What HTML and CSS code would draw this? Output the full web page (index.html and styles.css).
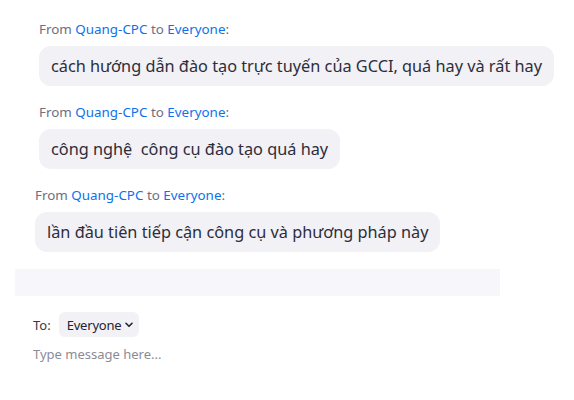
FILE: index.html
```html
<!DOCTYPE html>
<html lang="vi">
<head>
<meta charset="utf-8">
<link rel="stylesheet" href="styles.css">
</head>
<body>
<div class="chat">
  <div class="msg msg-a">
    <div class="meta">From <span class="name">Quang-CPC</span> to <span class="name">Everyone</span>:</div>
    <div class="bubble">cách hướng dẫn đào tạo trực tuyến của GCCI, quá hay và rất hay</div>
  </div>
  <div class="msg msg-a">
    <div class="meta">From <span class="name">Quang-CPC</span> to <span class="name">Everyone</span>:</div>
    <div class="bubble">công nghệ&nbsp; công cụ đào tạo quá hay</div>
  </div>
  <div class="msg msg-b">
    <div class="meta">From <span class="name">Quang-CPC</span> to <span class="name">Everyone</span>:</div>
    <div class="bubble">lần đầu tiên tiếp cận công cụ và phương pháp này</div>
  </div>
  <div class="band"></div>
  <div class="compose">
    <div class="to-row">
      <span class="to-label">To:</span>
      <span class="dropdown">Everyone
        <svg class="chev" width="8" height="6" viewBox="0 0 8 6"><path d="M1 1.3 L4 4.3 L7 1.3" fill="none" stroke="#232333" stroke-width="1.6" stroke-linecap="round" stroke-linejoin="round"/></svg>
      </span>
    </div>
    <div class="placeholder">Type message here...</div>
  </div>
</div>
</body>
</html>
```

FILE: styles.css
```css
html, body {
  margin: 0;
  padding: 0;
  background: #ffffff;
}
body {
  font-family: "Noto Sans", "Open Sans", sans-serif;
  color: #232333;
  width: 574px;
  height: 400px;
  overflow: hidden;
}
.chat {
  display: flex;
  flex-direction: column;
  padding-top: 20px;
}
.msg {
  display: flex;
  flex-direction: column;
  align-items: flex-start;
  gap: 8px;
  margin-bottom: 17px;
}
.msg-a { padding-left: 39px; }
.msg-b { padding-left: 35px; margin-bottom: 17px; }
.meta {
  font-size: 13.4px;
  line-height: 18px;
  color: #6e6e7e;
}
.name { color: #0e71eb; }
.bubble {
  background: #f1f1f6;
  border-radius: 12px;
  height: 40px;
  box-sizing: border-box;
  padding: 0 12px;
  display: flex;
  align-items: center;
  font-size: 16.3px;
  color: #2d2d3a;
  white-space: nowrap;
}
.band {
  margin-left: 15px;
  width: 485px;
  height: 27px;
  background: #f7f7fb;
}
.compose {
  padding-left: 33px;
  padding-top: 16px;
  display: flex;
  flex-direction: column;
  gap: 8px;
}
.to-row {
  display: flex;
  align-items: center;
  gap: 8px;
  font-size: 13px;
}
.to-label { color: #393946; }
.dropdown {
  display: flex;
  align-items: center;
  gap: 4px;
  height: 25px;
  box-sizing: border-box;
  padding: 0 6px 0 8px;
  background: #f1f1f6;
  border-radius: 6px;
  color: #232333;
  letter-spacing: -0.2px;
}
.placeholder {
  font-size: 13px;
  color: #8b8b97;
}
```
